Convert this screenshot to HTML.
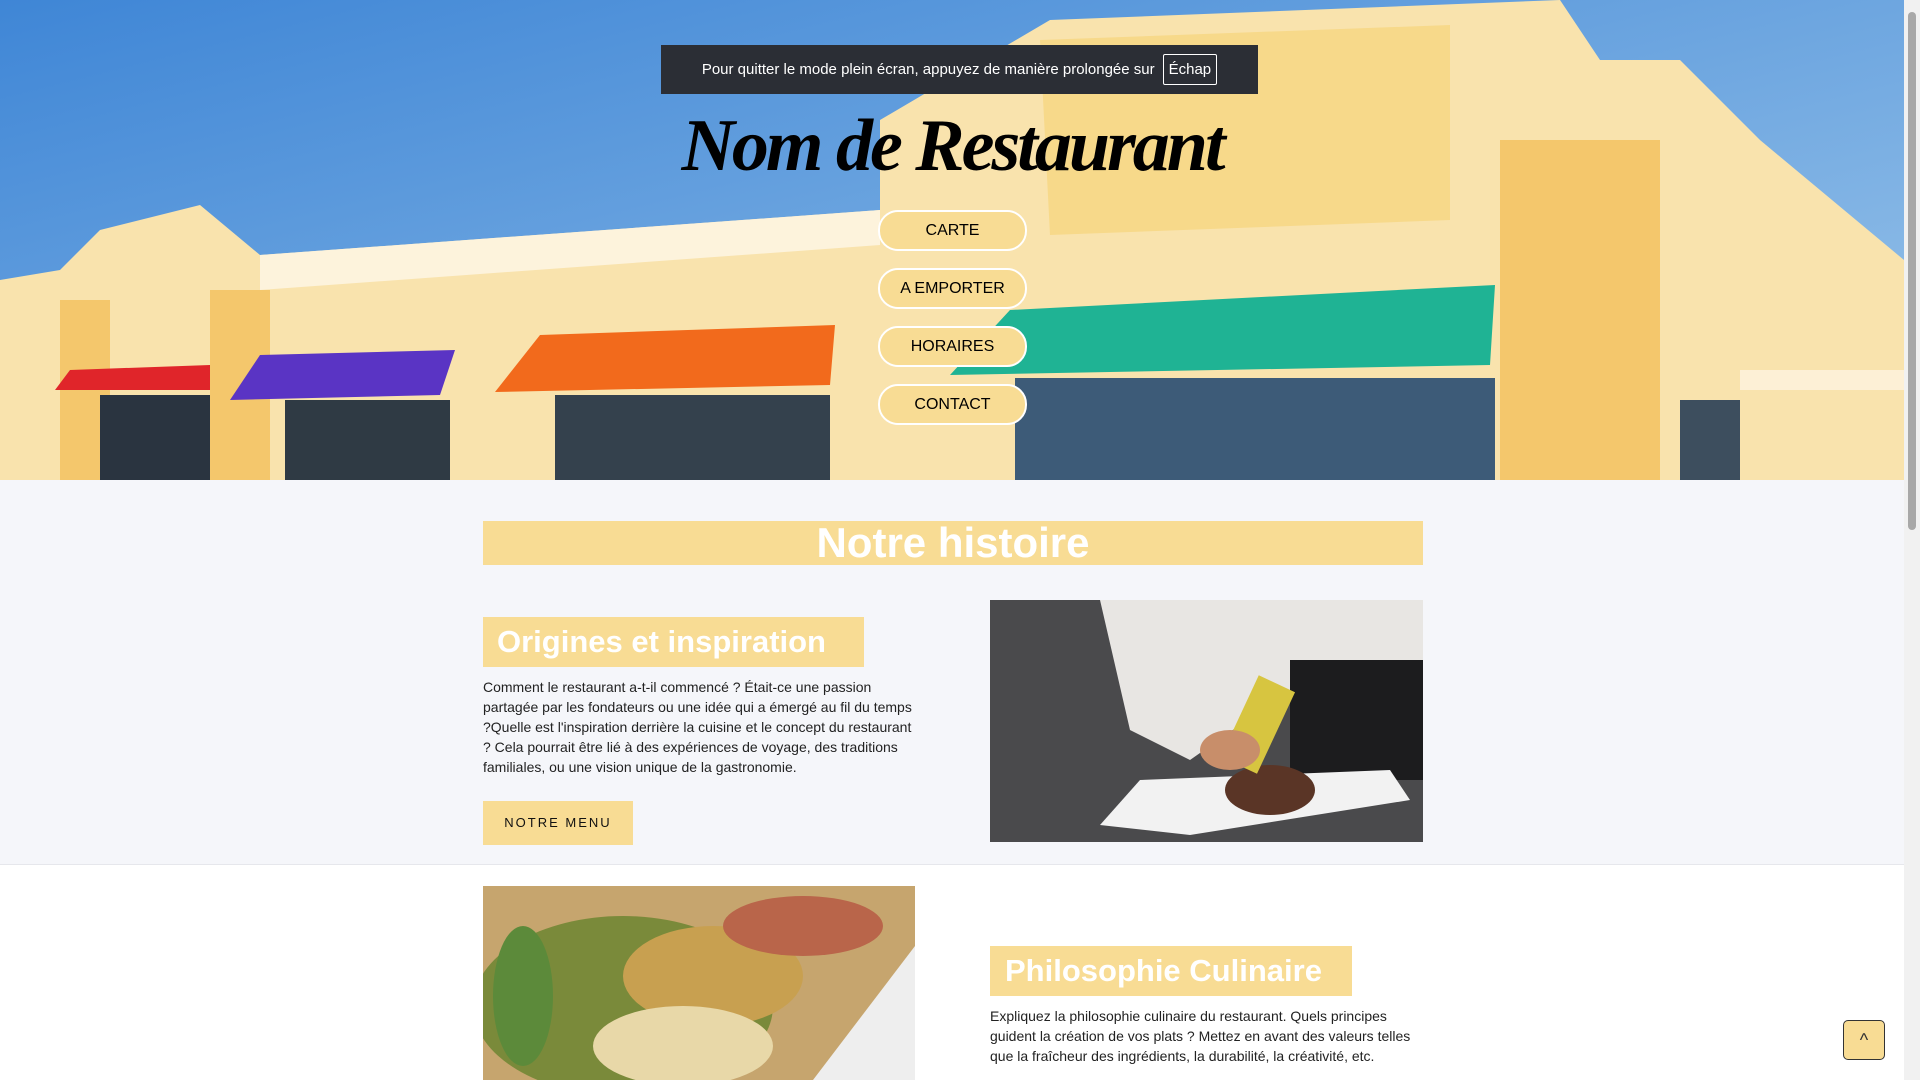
<!DOCTYPE html>
<html><head><meta charset="utf-8"><style>
*{margin:0;padding:0;box-sizing:border-box}
body{width:1920px;height:1080px;overflow:hidden;font-family:"Liberation Sans",sans-serif;background:#fff;position:relative}
.hero{position:absolute;left:0;top:0;width:1904px;height:480px;overflow:hidden}
.banner{position:absolute;left:661px;top:45px;width:597px;height:49px;background:#2b2e35;color:#fff;font-size:15px;display:flex;align-items:center;justify-content:center;gap:8px}
.banner span.k{border:1px solid #fff;border-radius:2px;padding:6px 5px}
.title{position:absolute;left:0;width:1904px;top:104px;text-align:center;font-family:"Liberation Serif",serif;font-style:italic;font-weight:bold;font-size:74px;color:#000;letter-spacing:-3px}
.nav{position:absolute;left:878px;width:149px;height:41px;background:#f8dc94;border:2px solid #fff;border-radius:20px;text-align:center;line-height:37px;font-size:16px;color:#000;font-family:"Liberation Sans Narrow","Liberation Sans",sans-serif}
.sec1{position:absolute;left:0;top:480px;width:1904px;height:385px;background:#f5f6fa;border-bottom:1px solid #e6e7ec}
.box{position:absolute;background:#f8dc94;color:#fff;font-family:"Liberation Sans",sans-serif;font-weight:bold;white-space:nowrap}
p.t{position:absolute;font-size:14px;line-height:20px;color:#222}
.scroll{position:absolute;right:0;top:0;width:16px;height:1080px;background:#f1f1f1}
.scroll div{position:absolute;left:4px;top:12px;width:8px;height:518px;background:#a8a8a8;border-radius:4px}
</style></head><body>
<div class="hero">
<svg width="1904" height="480" viewBox="0 0 1904 480">
<defs><linearGradient id="sky" x1="0" y1="0" x2="1" y2="1"><stop offset="0" stop-color="#3f86d6"/><stop offset="1" stop-color="#9cc6ea"/></linearGradient></defs>
<rect width="1904" height="480" fill="url(#sky)"/>
<polygon points="60,270 100,230 200,205 260,255 880,210 880,120 1050,20 1560,0 1600,60 1680,60 1760,140 1904,260 1904,480 0,480 0,280" fill="#f9e3ad"/>
<polygon points="260,255 880,210 880,245 260,290" fill="#fdf3dc"/>
<polygon points="1040,40 1450,25 1450,220 1050,235" fill="#f7d98a"/>
<rect x="1500" y="140" width="160" height="340" fill="#f4c76c"/>
<rect x="60" y="300" width="50" height="180" fill="#f4c76c"/>
<rect x="210" y="290" width="60" height="190" fill="#f4c76c"/>
<polygon points="55,390 210,390 210,365 70,370" fill="#e0252a"/>
<polygon points="230,400 440,395 455,350 260,355" fill="#5a34c4"/>
<polygon points="495,392 830,385 835,325 540,335" fill="#f26a1c"/>
<polygon points="950,375 1490,365 1495,285 1010,310" fill="#1fb394"/>
<rect x="100" y="395" width="110" height="85" fill="#2a3440"/>
<rect x="285" y="400" width="165" height="80" fill="#2f3a44"/>
<rect x="555" y="395" width="275" height="85" fill="#34414d"/>
<rect x="1015" y="378" width="480" height="102" fill="#3d5b78"/>
<rect x="1680" y="400" width="60" height="80" fill="#3d4e5e"/>
<rect x="1740" y="370" width="164" height="20" fill="#fdf0d6"/>
</svg>
<div class="banner"><span>Pour quitter le mode plein écran, appuyez de manière prolongée sur</span><span class="k">Échap</span></div>
<div class="title">Nom de Restaurant</div>
<div class="nav" style="top:210px">CARTE</div>
<div class="nav" style="top:268px">A EMPORTER</div>
<div class="nav" style="top:326px">HORAIRES</div>
<div class="nav" style="top:384px">CONTACT</div>
</div>
<div class="sec1"></div>
<div class="box" style="left:483px;top:521px;width:940px;height:44px;text-align:center;font-size:42px;line-height:44px">Notre histoire</div>
<div class="box" style="left:483px;top:617px;width:381px;height:50px;font-size:31px;line-height:50px;padding-left:14px">Origines et inspiration</div>
<p class="t" style="left:483px;top:677px;width:440px">Comment le restaurant a-t-il commencé ? Était-ce une passion partagée par les fondateurs ou une idée qui a émergé au fil du temps ?Quelle est l'inspiration derrière la cuisine et le concept du restaurant ? Cela pourrait être lié à des expériences de voyage, des traditions familiales, ou une vision unique de la gastronomie.</p>
<div style="position:absolute;left:483px;top:801px;width:150px;height:44px;background:#f8dc94;font-size:13px;letter-spacing:2px;line-height:44px;text-align:center;color:#111">NOTRE MENU</div>
<svg style="position:absolute;left:990px;top:600px" width="433" height="242"><rect width="433" height="242" fill="#4a4a4c"/><polygon points="110,0 433,0 433,130 300,90 200,160 140,130" fill="#e8e6e3"/><rect x="300" y="60" width="133" height="120" fill="#1c1c1e"/><polygon points="110,225 150,180 400,170 420,200 200,235" fill="#f2f2f2"/><ellipse cx="280" cy="190" rx="45" ry="25" fill="#5a3526"/><rect x="250" y="80" width="40" height="90" fill="#d7c540" transform="rotate(25 270 120)"/><ellipse cx="240" cy="150" rx="30" ry="20" fill="#c88e6a"/></svg>
<svg style="position:absolute;left:483px;top:886px" width="432" height="194"><rect width="432" height="194" fill="#c6a56e"/><polygon points="330,194 432,60 432,194" fill="#eee"/><ellipse cx="140" cy="120" rx="150" ry="90" fill="#7a8a3a"/><ellipse cx="230" cy="90" rx="90" ry="50" fill="#c8a050"/><ellipse cx="320" cy="40" rx="80" ry="30" fill="#b9654a"/><ellipse cx="200" cy="160" rx="90" ry="40" fill="#e8d8a8"/><ellipse cx="40" cy="110" rx="30" ry="70" fill="#5c8a3a"/></svg>
<div class="box" style="left:990px;top:946px;width:362px;height:50px;font-size:31px;line-height:50px;padding-left:15px">Philosophie Culinaire</div>
<p class="t" style="left:990px;top:1006px;width:440px">Expliquez la philosophie culinaire du restaurant. Quels principes guident la création de vos plats ? Mettez en avant des valeurs telles que la fraîcheur des ingrédients, la durabilité, la créativité, etc.</p>
<div style="position:absolute;left:1843px;top:1020px;width:42px;height:40px;background:#f8dc94;border:1px solid #333;border-radius:5px;text-align:center;line-height:38px;font-size:18px;color:#333">^</div>
<div class="scroll"><div></div></div>
</body></html>
